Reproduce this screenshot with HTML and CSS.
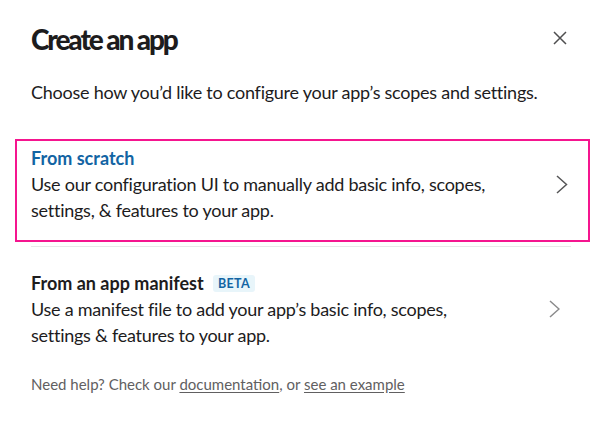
FILE: index.html
```html
<!DOCTYPE html>
<html lang="en">
<head>
    <meta charset="UTF-8">
    <title>Create an app</title>
    <link rel="stylesheet" href="styles.css">
</head>
<body>
    <div class="modal">
        <div class="header">
            <h1 class="title">Create an app</h1>
            <button class="close" aria-label="Close">
                <svg width="14" height="14" viewBox="0 0 14 14"><path d="M1 1L13 13M13 1L1 13" stroke="#4f4f50" stroke-width="1.5" fill="none"/></svg>
            </button>
        </div>
        <p class="intro">Choose how you’d like to configure your app’s scopes and settings.</p>

        <div class="option focused">
            <div class="option-row">
                <div class="option-text">
                    <h4 class="option-title blue">From scratch</h4>
                    <p>Use our configuration UI to manually add basic info, scopes, settings, &amp; features to your app.</p>
                </div>
                <svg class="chevron" width="12" height="19" viewBox="0 0 12 19"><path d="M1 1L10.5 9.5L1 18" stroke="#565657" stroke-width="1.5" fill="none"/></svg>
            </div>
        </div>
        <hr>
        <div class="option">
            <div class="option-row">
                <div class="option-text">
                    <h4 class="option-title">From an app manifest <span class="badge">BETA</span></h4>
                    <p>Use a manifest file to add your app’s basic info, scopes, settings &amp; features to your app.</p>
                </div>
                <svg class="chevron light" width="11" height="18" viewBox="0 0 11 18"><path d="M1 1L10 9L1 17" stroke="#8a8a8b" stroke-width="1.5" fill="none"/></svg>
            </div>
        </div>

        <p class="help">Need help? Check our <a href="#">documentation</a>, or <a href="#">see an example</a></p>
    </div>
</body>
</html>
```
FILE: styles.css
```css
body{
    margin: 0;
    font-family: 'Lato', sans-serif;
    color: #1d1c1d;
    background: #fff;
}
.modal{
    padding: 22px 10px 0 15px;
}
.header{
    display: flex;
    align-items: center;
    justify-content: space-between;
    padding: 0 23px 0 16px;
}
.title{
    margin: 0;
    font-size: 28px;
    font-weight: 900;
    line-height: 34px;
    letter-spacing: -2.1px;
}
.close{
    border: 0;
    background: none;
    padding: 0;
    display: flex;
    margin-top: -3px;
}
.intro{
    margin: 23px 0 0 16px;
    font-size: 18px;
    line-height: 26px;
    letter-spacing: -0.25px;
}
.option{
    padding: 0 16px;
}
.option.focused{
    margin-top: 34px;
    border: 2px solid #f5158f;
    padding: 4px 20px 17px 14px;
}
.option-row{
    display: flex;
    align-items: center;
}
.option-text{
    width: 470px;
}
.option-title{
    margin: 0;
    font-size: 18px;
    font-weight: 700;
    line-height: 26px;
}
.blue{
    color: #1264a3;
}
.option p{
    margin: 0;
    font-size: 18px;
    line-height: 26px;
    letter-spacing: -0.25px;
}
.chevron{
    margin-left: auto;
}
.chevron.light{
    margin-right: 14px;
}
.badge{
    display: inline-block;
    margin-left: 5px;
    padding: 0 5px;
    height: 17px;
    line-height: 18px;
    vertical-align: 2px;
    background: #e8f5fa;
    color: #1264a3;
    border-radius: 3px;
    font-size: 12.5px;
    font-weight: 700;
    letter-spacing: 0.3px;
}
hr{
    margin: 4px 19px 0 16px;
    border: 0;
    border-top: 1px solid #e8e8e8;
    height: 0;
}
.option:last-of-type{
    margin-top: 23px;
}
.help{
    margin: 25px 0 0 16px;
    font-size: 15px;
    line-height: 22px;
    color: #616061;
}
.help a{
    color: #616061;
    text-decoration: underline;
    text-underline-offset: 2px;
}
```
